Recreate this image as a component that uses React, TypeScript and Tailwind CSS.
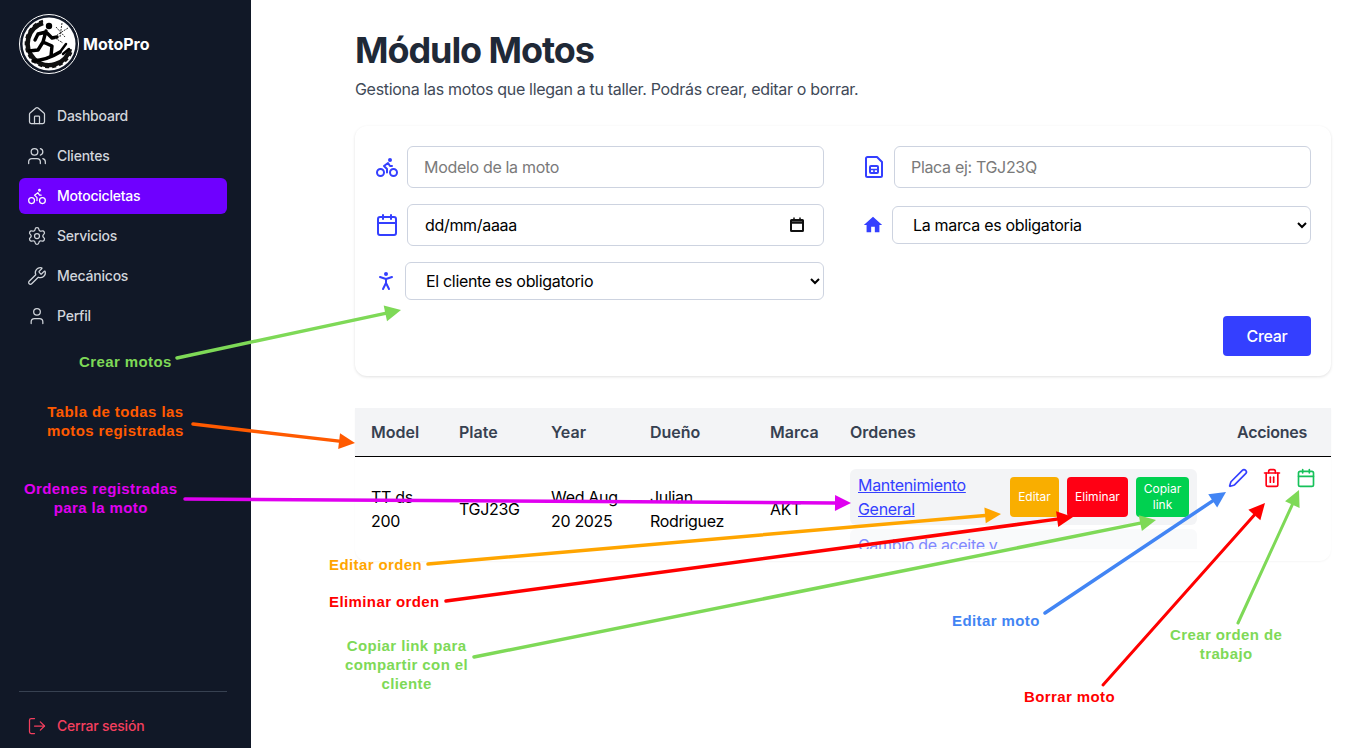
import React from "react";
import { Bike, Calendar, House, LogOut, Pen, PersonStanding, Settings, Trash2, User, Users, Wrench } from "lucide-react";
import { MdHome } from "react-icons/md";

const navItems = [
  { label: "Dashboard", icon: House },
  { label: "Clientes", icon: Users },
  { label: "Motocicletas", icon: Bike, active: true },
  { label: "Servicios", icon: Settings },
  { label: "Mecánicos", icon: Wrench },
  { label: "Perfil", icon: User },
];

const arrows = [
  { color: "#7ed957", x1: 177, y1: 358, x2: 401, y2: 310, w: 3.5 },
  { color: "#ff5a00", x1: 193, y1: 424, x2: 355, y2: 443, w: 3.5 },
  { color: "#e000f0", x1: 185, y1: 499, x2: 851, y2: 503, w: 3.5 },
  { color: "#ffa500", x1: 428, y1: 564, x2: 1001, y2: 514, w: 3.5 },
  { color: "#ff0000", x1: 446, y1: 601, x2: 1073, y2: 517, w: 3.5 },
  { color: "#7ed957", x1: 474, y1: 657, x2: 1156, y2: 520, w: 3.5 },
  { color: "#4285f4", x1: 1045, y1: 613, x2: 1226, y2: 492, w: 3.5 },
  { color: "#ff0000", x1: 1103, y1: 685, x2: 1265, y2: 503, w: 3 },
  { color: "#7ed957", x1: 1238, y1: 623, x2: 1299, y2: 490, w: 3 },
];

function arrowHead(a: { x1: number; y1: number; x2: number; y2: number }) {
  const len = Math.hypot(a.x2 - a.x1, a.y2 - a.y1);
  const ux = (a.x2 - a.x1) / len;
  const uy = (a.y2 - a.y1) / len;
  const bx = a.x2 - ux * 16;
  const by = a.y2 - uy * 16;
  return {
    points: `${a.x2},${a.y2} ${bx - uy * 8},${by + ux * 8} ${bx + uy * 8},${by - ux * 8}`,
    bx,
    by,
  };
}

function Logo() {
  return (
    <svg width="60" height="60" viewBox="0 0 60 60" className="shrink-0">
      <circle cx="30" cy="30" r="29.5" fill="none" stroke="#fff" />
      <circle cx="30" cy="30" r="26.5" fill="#fff" />
      <path d="M24 9 A21.5 21.5 0 1 0 51 35" fill="none" stroke="#111" strokeWidth="4.5" />
      <path d="M24 7 A23.5 23.5 0 1 0 53 36" fill="none" stroke="#111" strokeWidth="2.5" strokeDasharray="4 3" />
      <circle cx="30" cy="12" r="3.2" fill="#000" />
      <path d="M27 17 L24 28 M27 18 L19 20 L16 26 M27 18 L33 24 L38 23 M24 28 L33 32 L32 42 M24 28 L19 36 L10 37" fill="none" stroke="#000" strokeWidth="3.4" strokeLinecap="round" strokeLinejoin="round" />
      <path d="M14 47 Q28 46 41 38" fill="none" stroke="#000" strokeWidth="3.5" strokeLinecap="round" />
      <path d="M41 38 L47 30 M44 40 L50 35" fill="none" stroke="#000" strokeWidth="2.5" strokeLinecap="round" />
      <path d="M37 13 L46 23 M43 9 L41 23 M49 14 L38 21 M36 24 L44 29" fill="none" stroke="#333" strokeWidth="1" strokeDasharray="2 1" />
    </svg>
  );
}

function SimIcon() {
  return (
    <svg width="24" height="24" viewBox="0 0 24 24" fill="none" stroke="#343fff" strokeWidth="2" strokeLinejoin="round" className="shrink-0">
      <path d="M4 3.5 a1.5 1.5 0 0 1 1.5-1.5 h9.5 l5 5 v13.5 a1.5 1.5 0 0 1-1.5 1.5 H5.5 a1.5 1.5 0 0 1-1.5-1.5 Z" />
      <rect x="8" y="11" width="8" height="7" rx="1" />
      <path d="M8 14.5 h8 M12 14.5 V18" strokeWidth="1.6" />
    </svg>
  );
}

function SmallCalendar() {
  return (
    <svg width="18" height="18" viewBox="0 0 18 18" fill="none" stroke="#111" strokeWidth="2" className="shrink-0">
      <rect x="3" y="4" width="12" height="11" rx="0.5" />
      <path d="M3 6.5 h12" strokeWidth="2.5" />
      <path d="M6 1.5 v2.5 M12 1.5 v2.5" strokeWidth="1.5" />
    </svg>
  );
}

const inputClass = "w-full h-[42px] rounded-md border border-[#cdd3e0] bg-white px-4 text-base outline-none placeholder:text-[#7a7a7a]";
const selectClass = "w-full h-[38px] rounded-md border border-[#cdd3e0] bg-white pl-4 pr-2 text-base text-black outline-none";
const noteClass = "absolute text-center text-[15px]/[19px] font-bold tracking-[0.4px] whitespace-nowrap font-['Liberation_Sans',sans-serif]";

export default function App() {
  return (
    <div className="relative flex h-[748px] overflow-hidden bg-white font-['Inter',sans-serif] tracking-[-0.02em]">
      <aside className="flex w-[251px] shrink-0 flex-col bg-[#111827] px-[19px] pt-[14px]">
        <div className="flex items-center gap-1">
          <Logo />
          <span className="text-base font-bold tracking-normal text-white">MotoPro</span>
        </div>
        <nav className="mt-6 flex w-[208px] flex-col gap-1">
          {navItems.map((item) => (
            <a
              key={item.label}
              className={
                item.active
                  ? "flex h-9 items-center gap-2.5 rounded-md bg-[#6f00ff] px-2 text-sm font-medium tracking-[-0.016em] text-white"
                  : "flex h-9 items-center gap-2.5 rounded-md px-2 text-sm font-medium tracking-[-0.016em] text-[#d1d5db]"
              }
            >
              <item.icon size={20} strokeWidth={1.5} />
              {item.label}
            </a>
          ))}
        </nav>
        <div className="mt-auto w-[208px] border-t border-[#374151] pt-4 pb-[4px]">
          <a className="flex h-9 items-center gap-2.5 px-2 text-sm font-medium tracking-[-0.016em] text-[#f43f5e]">
            <LogOut size={20} strokeWidth={1.5} />
            Cerrar sesión
          </a>
        </div>
      </aside>

      <main className="flex-1 pt-[30px] pr-[35px] pl-[104px]">
        <h1 className="text-4xl font-bold tracking-[-0.03em] text-[#1f2937]">Módulo Motos</h1>
        <p className="mt-[7px] text-base text-[#414a58]">Gestiona las motos que llegan a tu taller. Podrás crear, editar o borrar.</p>

        <section className="mt-[25px] rounded-xl bg-white p-5 shadow-[0_1px_3px_rgba(0,0,0,0.12)]">
          <div className="grid grid-cols-2 items-center gap-x-[38px] gap-y-4">
            <div className="flex items-center gap-2">
              <Bike size={24} strokeWidth={2} color="#343fff" className="shrink-0" />
              <input className={inputClass} placeholder="Modelo de la moto" />
            </div>
            <div className="flex items-center gap-2">
              <SimIcon />
              <input className={inputClass} placeholder="Placa ej: TGJ23Q" />
            </div>
            <div className="flex items-center gap-2">
              <Calendar size={24} strokeWidth={2} color="#343fff" className="shrink-0" />
              <div className="flex h-[42px] w-full items-center rounded-md border border-[#cdd3e0] bg-white pr-[17px] pl-[17px]">
                <input className="w-full text-base text-black outline-none" defaultValue="dd/mm/aaaa" />
                <SmallCalendar />
              </div>
            </div>
            <div className="flex items-center gap-2">
              <MdHome size={22} color="#343fff" className="shrink-0" />
              <select className={selectClass} defaultValue="">
                <option value="">La marca es obligatoria</option>
              </select>
            </div>
            <div className="flex items-center gap-2">
              <PersonStanding size={24} strokeWidth={2} color="#343fff" className="-mx-px shrink-0" />
              <select className={selectClass} defaultValue="">
                <option value="">El cliente es obligatorio</option>
              </select>
            </div>
          </div>
          <div className="mt-4 flex justify-end">
            <button className="h-10 w-[88px] rounded bg-[#343fff] text-base font-medium text-white">Crear</button>
          </div>
        </section>

        <div className="mt-8 overflow-hidden rounded-b-xl shadow-[0_1px_2px_rgba(0,0,0,0.04)]">
          <table className="w-full table-fixed border-collapse text-left text-base text-black">
            <thead className="bg-[#f3f4f6] tracking-normal text-[#374151]">
              <tr className="h-[48px] border-b border-black">
                <th className="w-[88px] pl-4 font-semibold">Model</th>
                <th className="w-[92px] pl-4 font-semibold">Plate</th>
                <th className="w-[99px] pl-4 font-semibold">Year</th>
                <th className="w-[120px] pl-4 font-semibold">Dueño</th>
                <th className="w-[80px] pl-4 font-semibold">Marca</th>
                <th className="pl-4 font-semibold">Ordenes</th>
                <th className="w-[118px] pr-6 text-right font-semibold tracking-[-0.25px]">Acciones</th>
              </tr>
            </thead>
            <tbody>
              <tr>
                <td className="px-4">TT ds 200</td>
                <td className="pl-4">TGJ23G</td>
                <td className="px-4">Wed Aug 20 2025</td>
                <td className="px-4">Julian Rodriguez</td>
                <td className="pl-4">AKT</td>
                <td className="py-3 pr-4 pl-4">
                  <div className="flex max-h-20 flex-col gap-1 overflow-hidden">
                    <div className="flex items-center justify-between rounded-md bg-[#f3f4f6] py-1 pr-2 pl-2">
                      <a className="w-[150px] text-[#343fff] underline">Mantenimiento General</a>
                      <div className="flex gap-2 text-xs tracking-normal text-white">
                        <button className="h-10 w-[49px] rounded bg-[#f9ae00]">Editar</button>
                        <button className="h-10 w-[61px] rounded bg-[#ff0014]">Eliminar</button>
                        <button className="h-10 w-[53px] rounded bg-[#00d150]">Copiar link</button>
                      </div>
                    </div>
                    <div className="flex items-center justify-between rounded-md bg-[#f9fafb] py-1 pr-2 pl-2">
                      <a className="w-[150px] text-[#8088ff] underline">Cambio de aceite y filtro</a>
                    </div>
                  </div>
                </td>
                <td className="pt-[11px] align-top">
                  <div className="flex justify-end gap-3.5 pr-[15px]">
                    <Pen size={20} strokeWidth={2} color="#343fff" />
                    <Trash2 size={20} strokeWidth={2} color="#ff0014" />
                    <Calendar size={20} strokeWidth={2} color="#16c15a" />
                  </div>
                </td>
              </tr>
            </tbody>
          </table>
        </div>
      </main>

      {/* anotaciones encima de la captura */}
      <svg className="pointer-events-none absolute inset-0" width="1366" height="748">
        {arrows.map((a, i) => {
          const head = arrowHead(a);
          return (
            <g key={i}>
              <line x1={a.x1} y1={a.y1} x2={head.bx} y2={head.by} stroke={a.color} strokeWidth={a.w} strokeLinecap="round" />
              <polygon points={head.points} fill={a.color} />
            </g>
          );
        })}
      </svg>
      <div className={`${noteClass} top-[352px] left-[79px] text-[#7ed957]`}>Crear motos</div>
      <div className={`${noteClass} top-[402px] left-[47px] text-[#ff5a00]`}>Tabla de todas las<br />motos registradas</div>
      <div className={`${noteClass} top-[479px] left-[24px] text-[#e000f0]`}>Ordenes registradas<br />para la moto</div>
      <div className={`${noteClass} top-[555px] left-[329px] text-[#ffa500]`}>Editar orden</div>
      <div className={`${noteClass} top-[592px] left-[329px] text-[#ff0000]`}>Eliminar orden</div>
      <div className={`${noteClass} top-[636px] left-[345px] text-[#7ed957]`}>Copiar link para<br />compartir con el<br />cliente</div>
      <div className={`${noteClass} top-[611px] left-[952px] text-[#4285f4]`}>Editar moto</div>
      <div className={`${noteClass} top-[625px] left-[1170px] text-[#7ed957]`}>Crear orden de<br />trabajo</div>
      <div className={`${noteClass} top-[687px] left-[1024px] text-[#ff0000]`}>Borrar moto</div>
    </div>
  );
}
